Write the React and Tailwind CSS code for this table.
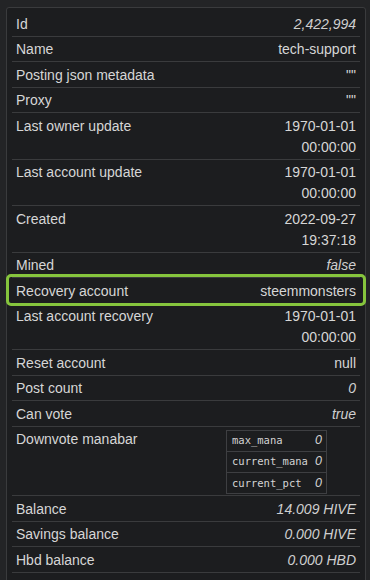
import React from "react";

const rows = [
  { k: "Id", v: "2,422,994", i: true },
  { k: "Name", v: "tech-support" },
  { k: "Posting json metadata", v: '""' },
  { k: "Proxy", v: '""' },
  { k: "Last owner update", v: ["1970-01-01", "00:00:00"] },
  { k: "Last account update", v: ["1970-01-01", "00:00:00"] },
  { k: "Created", v: ["2022-09-27", "19:37:18"] },
  { k: "Mined", v: "false", i: true },
  { k: "Recovery account", v: "steemmonsters", hl: true },
  { k: "Last account recovery", v: ["1970-01-01", "00:00:00"] },
  { k: "Reset account", v: "null" },
  { k: "Post count", v: "0", i: true },
  { k: "Can vote", v: "true", i: true },
  { k: "Downvote manabar", table: true },
  { k: "Balance", v: "14.009 HIVE", i: true },
  { k: "Savings balance", v: "0.000 HIVE", i: true },
  { k: "Hbd balance", v: "0.000 HBD", i: true },
];

const mana = [
  ["max_mana", "0"],
  ["current_mana", "0"],
  ["current_pct", "0"],
];

function Value({ r }) {
  if (r.table) {
    return (
      <div className="pr-[29px] pt-[1px]">
        <div className="border border-[#3e3f42] w-[101px]">
          {mana.map(([a, b], idx) => (
            <div
              key={a}
              className={
                "flex justify-between items-center h-[20.8px] pl-[5px] pr-[4px] " +
                (idx < 2 ? "border-b border-[#3e3f42]" : "")
              }
            >
              <span className="text-[10.5px] text-[#d4d4d4] [font-family:'DejaVu_Sans_Mono',monospace]">
                {a}
              </span>
              <span className="italic text-[12.5px] text-[#d4d4d4]">{b}</span>
            </div>
          ))}
        </div>
      </div>
    );
  }
  if (Array.isArray(r.v)) {
    return (
      <div className="text-right">
        {r.v.map((x) => (
          <div key={x}>{x}</div>
        ))}
      </div>
    );
  }
  return <div className={"text-right " + (r.i ? "italic text-[#cfcfcf]" : "")}>{r.v}</div>;
}

export default function App() {
  return (
    <div className="min-h-[580px] bg-[#232426] pt-[7px] px-[6px] [font-family:'Liberation_Sans',Arial,sans-serif] text-[14px] leading-[21px] text-[#d6d6d6]">
      <div className="bg-[#1c1d1f] border border-[#3a3b3d] rounded-t-[3px] w-[360px] pt-[3px] px-[5px] pb-[20px]">
        {rows.map((r) => (
          <div
            key={r.k}
            className="relative flex justify-between items-start px-[4px] pt-[2.5px] pb-[1px] border-b border-[#3a3b3d]"
          >
            <div>{r.k}</div>
            <Value r={r} />
            {r.hl && (
              <div className="absolute left-[-6px] right-[-6px] top-[-4px] bottom-[-3px] border-[3px] border-[#86c53d] rounded-[5px] pointer-events-none" />
            )}
          </div>
        ))}
      </div>
    </div>
  );
}
